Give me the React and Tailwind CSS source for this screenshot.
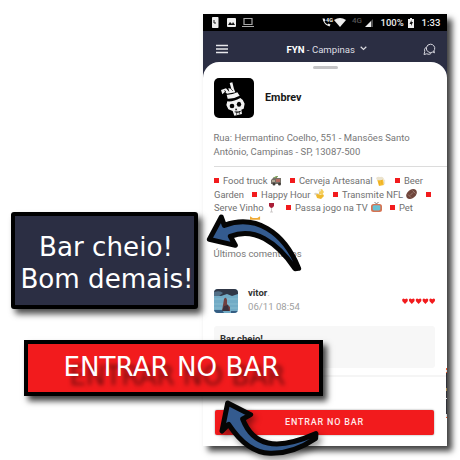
import React from "react";

const Square = ({ className = "" }) => (
  <span className={`h-[5px] w-[5px] shrink-0 bg-[#f21b1d] ${className}`} />
);

const Skull = () => (
  <svg viewBox="0 0 120 120" className="h-full w-full">
    <g fill="#f2f2f2">
      <path d="M40 70 Q58 72 79 60 Q89 65 92 77 L89 92 L82 95 L84 108 L61 113 L56 99 L43 94 L37 81Z" />
      <path d="M38 50 Q54 51 70 43 L77 53 Q59 63 41 62Z" />
      <path d="M39 47 L33 41 L25 49 L21 36 L36 31 L46 42 L43 30 L52 33 L47 15 L55 13 L60 33 L64 43Z" />
    </g>
    <g fill="#050505">
      <ellipse cx="54" cy="84" rx="7" ry="7" />
      <ellipse cx="75" cy="79" rx="6.5" ry="7.5" />
      <path d="M66 90 l4 7 h-7Z M62 103 q10 3 18-2 v-3 q-9 4-18 2Z" />
    </g>
    <path d="M31 38l5 3M52 34l4 4" stroke="#111" strokeWidth="3" />
    <path d="M68 101v10M76 99v10" stroke="#111" strokeWidth="2" />
  </svg>
);

const Truck = ({ className }) => (
  <svg viewBox="0 0 11 10" className={className}>
    <path d="M0 4 3 1h3v1h4v6H0Z" fill="#777269" />
    <path d="M2 2 5 0h2v1l-3 1Z" fill="#86aa65" />
    <path d="M5 3h4v3H5Z" fill="#b56b61" />
    <path d="M1 4h3v2H1Z" fill="#b1a997" />
    <circle cx="3" cy="8" r="1.5" fill="#403d39" />
    <circle cx="8.5" cy="8" r="1.5" fill="#403d39" />
  </svg>
);
const Beer = ({ className }) => (
  <svg viewBox="0 0 10 10" className={className}>
    <path d="m1 3 6-1 1 7-5 1Z" fill="#f6bd2d" />
    <path d="M7 4h1.6v4H7" fill="none" stroke="#e5decf" strokeWidth=".8" />
    <path d="M0 2Q2 0 4 1q3-1 4 2-3 2-7 1Z" fill="#ebe3ce" />
    <path d="m3 5 .5 4M5.5 4l.5 4" stroke="#df9c20" strokeWidth=".5" />
  </svg>
);
const Cheers = ({ className }) => (
  <svg viewBox="0 0 11 10" className={className}>
    <path d="M0 5q1-2 3-1l3 1-1 2-4-1Z" fill="#ddd5c5" />
    <path d="m3 5 4 1 2-1 1 2-3 3-4-1-1-3Z" fill="#efb92f" />
    <path d="m5 1 3-1 2 3-2 3-3-1Z" fill="#f5cf5c" />
    <path d="m4 1 3-1v2l-2 1Z" fill="#ece5d2" />
  </svg>
);
const Football = ({ className }) => (
  <svg viewBox="0 0 11 10" className={className}>
    <ellipse cx="5.5" cy="5" rx="5.9" ry="4.2" transform="rotate(-38 5.5 5)" fill="#70463c" />
    <path d="M2 5.5 5 8.5M6.5 1.5l3 3M4 6.5l3-3" stroke="#b69c92" strokeWidth=".6" />
  </svg>
);
const Wine = ({ className }) => (
  <svg viewBox="0 0 7 11" className={className}>
    <path d="M1 1h5v3Q3.5 8 1 4Z" fill="#a91e37" />
    <path d="M3.5 6v4M2 10h3" stroke="#c4bfbf" strokeWidth=".8" />
  </svg>
);
const Tv = ({ className }) => (
  <svg viewBox="0 0 11 11" className={className}>
    <path d="m3.5 0 2 2 2-2" fill="none" stroke="#7d7775" />
    <rect y="2" width="11" height="8" rx="2.5" fill="#d67352" />
    <rect x="1.7" y="3.2" width="7.6" height="5.2" rx="1.4" fill="#68c1d4" />
  </svg>
);

const StatusBar = () => (
  <div className="flex h-[17px] shrink-0 items-center bg-black text-[9.5px] font-medium text-[#ececec]">
    <svg viewBox="0 0 118 17" className="h-[17px] w-[118px] shrink-0">
      <rect x="9" y="3" width="6.5" height="11" rx=".7" fill="#eee" />
      <path d="M11 6v3h2" fill="none" stroke="#222" />
      <rect x="24" y="4" width="9" height="9" rx="1" fill="#eee" />
      <path d="m25 11 2-3 2 2 1-2 2 3Z" fill="#111" />
      <path d="M41 4.5h8v6h-8Z M39 12.5h12" fill="none" stroke="#aaa" strokeWidth="1.2" />
    </svg>
    <svg viewBox="118 0 53 17" className="h-[17px] w-[53px] shrink-0">
      <path d="M119.5 4.5q1 6 7 8l1-2-2-1-1 1q-2-1-3-3l1-1-1-2Z" fill="#eee" />
      <text x="123" y="8" fill="#eee" fontFamily="Roboto, sans-serif" fontSize="5.5" fontWeight="700">4G</text>
      <path d="M131 6q6-4 12 0l-6 7Z" fill="#eee" />
      <text x="149" y="9" fill="#555" fontFamily="Roboto, sans-serif" fontSize="8">4G</text>
      <path d="m162 13 6-6v6Z" fill="#eee" />
      <path d="m168 7 2-2v8h-2Z" fill="#555" />
    </svg>
    <span className="ml-[6.5px] w-[27.5px] whitespace-nowrap pt-px">100%</span>
    <svg viewBox="0 0 6 10" className="h-[10px] w-[6px] shrink-0">
      <path d="M1 1h1V0h2v1h2v9H0V1Z" fill="#eee" />
      <path d="M3.5 2 1.5 6H3v2l2-4H3.5Z" fill="#111" />
    </svg>
    <span className="ml-[7.5px] pt-px tracking-[.1px]">1:33</span>
  </div>
);

export default function App() {
  return (
    <main className="relative h-[460px] w-[460px] overflow-hidden bg-white pl-[203px] pt-[14px] font-[Roboto,sans-serif]">
      <section className="flex h-[432px] w-[244px] flex-col bg-[#2b2e43] shadow-[5px_5px_6px_rgba(0,0,0,.75)]">
        <StatusBar />
        <header className="flex h-[31px] shrink-0 items-center pt-[5px]">
          <svg viewBox="0 0 12 10" className="ml-[13px] h-[10px] w-[12px]">
            <path d="M0 1.5h12M0 5h12M0 8.5h12" stroke="#e7e7eb" strokeWidth="1.3" />
          </svg>
          <p className="ml-[58.5px] w-[70.5px] whitespace-nowrap pt-[2px] text-[9.6px] text-[#dddde2]">
            <b className="text-white">FYN</b> - Campinas
          </p>
          <svg viewBox="0 0 7 5" className="mb-[2px] ml-[3px] h-[5px] w-[7px]">
            <path d="m.7.8 2.8 2.7L6.3.8" fill="none" stroke="#dddde2" strokeWidth="1.2" />
          </svg>
          <svg viewBox="0 0 13 13" className="ml-[56px] h-[13px] w-[13px]" fill="none" stroke="#d6d6de" strokeWidth="1">
            <path d="M7.4 1.2a4.2 4.2 0 1 1-2 7.8A4.2 4.2 0 0 1 7.4 1.2M10 9l1.5.8-.5-1.8M3 4.2Q.8 6 1.7 8.7L1 11.5l2.7-.7q2.3 1.2 4.5-.3" />
          </svg>
        </header>

        <div className="flex min-h-0 flex-1 flex-col rounded-t-[16px] bg-white">
          <div className="mx-auto mt-[4px] h-[3px] w-[25px] shrink-0 rounded-full bg-[#c4c4c6]" />
          <div className="ml-[11px] mt-[9px] flex h-[40px] shrink-0 items-center">
            <div className="h-[40px] w-[40px] overflow-hidden rounded-[5px] bg-black"><Skull /></div>
            <h1 className="ml-[11px] pt-px text-[10.8px] font-bold text-[#171717]">Embrev</h1>
          </div>
          <address className="ml-[10.5px] mt-[13px] h-[35px] shrink-0 whitespace-nowrap text-[9.5px] not-italic leading-[13.5px] text-[#777]">
            Rua: Hermantino Coelho, 551 - Mansões Santo<br />Antônio, Campinas - SP, 13087-500
          </address>
          <hr className="ml-[11px] shrink-0 border-[#dcdcdc]" />
          <div className="ml-[11px] mt-[7px] flex h-[41px] shrink-0 flex-col whitespace-nowrap text-[9.4px] leading-[13.5px] text-[#707070]">
            <div className="flex h-[13.5px] items-center">
              <Square /><span className="ml-[4px] w-[48px]">Food truck</span>
              <Truck className="h-[10px] w-[11px] shrink-0" />
              <Square className="ml-[8px]" /><span className="ml-[4px] w-[77px]">Cerveja Artesanal</span>
              <Beer className="h-[10px] w-[10px] shrink-0" />
              <Square className="ml-[9px]" /><span className="ml-[4px]">Beer</span>
            </div>
            <div className="flex h-[13.5px] items-center">
              <span className="w-[38px]">Garden</span><Square /><span className="ml-[4px] w-[53px]">Happy Hour</span>
              <Cheers className="h-[10px] w-[11px] shrink-0" />
              <Square className="ml-[8px]" /><span className="ml-[4px] w-[64px]">Transmite NFL</span>
              <Football className="h-[10px] w-[11px] shrink-0" />
              <Square className="ml-[9px]" />
            </div>
            <div className="flex h-[13.5px] items-center">
              <span className="w-[54px]">Serve Vinho</span>
              <Wine className="h-[11px] w-[7px] shrink-0" />
              <Square className="ml-[11px]" /><span className="ml-[4px] w-[76px]">Passa jogo na TV</span>
              <Tv className="h-[11px] w-[11px] shrink-0" />
              <Square className="ml-[8px]" /><span className="ml-[4px]">Pet</span>
            </div>
          </div>
          <div className="ml-[47px] h-[5px] shrink-0">
            <svg viewBox="0 0 12 5" className="h-[5px] w-[11px]"><path d="M0 5V1l3 2h5l3-2v4Z" fill="#efaa35" /></svg>
          </div>
          <h2 className="ml-[10.5px] mt-[27px] h-[14px] shrink-0 text-[9.5px] leading-[14px] text-[#777]">Últimos comentários</h2>
          <div className="ml-[11px] mt-[26px] flex h-[28px] shrink-0 items-center">
            <svg viewBox="0 0 24 24" className="h-[24px] w-[24px] shrink-0 overflow-hidden rounded-[4px] blur-[.4px]">
              <path d="M0 0h24v24H0Z" fill="#72abc5" />
              <path d="M0 0h24v5l-6 2-5-2-6 2-7-1Z" fill="#303746" />
              <path d="M0 3q6-2 9 1l-4 3H0Z" fill="#527087" />
              <path d="M0 10h24M0 15h24M0 19h24" stroke="#9bcedb" strokeWidth="1.2" opacity=".5" />
              <path d="M10 10q2-3 3 1v4l3 3v4H8l1-6Z" fill="#713f3e" />
              <path d="m10 17 4-1 1 6H8Z" fill="#3b303b" />
              <path d="M0 21h8l2 3H0ZM17 22h7v2h-7Z" fill="#345d82" />
            </svg>
            <div className="ml-[10px] w-[153.5px] whitespace-nowrap">
              <p className="-mt-[2px] text-[9.5px] font-bold leading-[14px] text-[#333]">vitor<span className="font-normal text-[#aaa]">.</span></p>
              <p className="text-[9.6px] leading-[14px] text-[#a0a0a0]">06/11 08:54</p>
            </div>
            <svg viewBox="0 0 34 6" className="h-[6px] w-[34px]" fill="#f21b1d">
              {[0, 6.8, 13.6, 20.4, 27.2].map((x) => <path key={x} transform={`translate(${x} 0)`} d="M3 6 .4 3.2Q-.4.5 1.6.4L3 1.2 4.4.4Q6.4.5 5.6 3.2Z" />)}
            </svg>
          </div>
          <div className="ml-[11px] mt-[11px] h-[42px] w-[221px] shrink-0 rounded-[3px] bg-[#f7f7f7] pl-[6px] pt-[6px] text-[9.5px] font-bold leading-[14px] text-[#333]">Bar cheio!</div>
          <div className="mt-[7px] h-[2px] shrink-0 bg-[#f5f5f5]" />
          <button className="ml-[12px] mt-[33px] h-[25px] w-[219px] shrink-0 rounded-[2px] bg-[#f21b1d] text-[9px] font-medium tracking-[.8px] text-[#ffe9e9] shadow-[0_0_2px_rgba(0,0,0,.45)]">ENTRAR NO BAR</button>
        </div>
      </section>

      <svg viewBox="0 0 2 50" className="absolute left-[446px] top-[368px] h-[50px] w-[1px]" preserveAspectRatio="none">
        <path d="M0 0h2v46H0Z" fill="#303138" />
        <path d="M0 0h2v2H0Zm0 4h2v1H0Zm0 45h2v1H0Z" fill="#ee5c31" />
        <path d="M0 20h2v3H0Z" fill="#a3854f" />
        <path d="M0 2h2v2H0Zm0 28h2v1H0Zm0 16h2v3H0Z" fill="#ddd" />
      </svg>

      <div className="absolute left-[11px] top-[212px] flex h-[97px] w-[187px] flex-col items-center justify-center whitespace-nowrap rounded-[3px] border-4 border-black bg-[#2b2e43] pl-[5px] pt-[5px] font-['DejaVu_Sans',sans-serif] text-[26.15px] leading-[32px] text-white shadow-[4px_5px_6px_rgba(0,0,0,.7)]">
        <span className="mr-[2px]">Bar cheio!</span><span>Bom demais!</span>
      </div>
      <div className="absolute left-[24px] top-[340px] flex h-[56px] w-[299px] items-center justify-center whitespace-nowrap border-4 border-black bg-[#f21b1d] pb-px pr-[4px] font-['DejaVu_Sans',sans-serif] text-[26.15px] text-white shadow-[4px_5px_6px_rgba(0,0,0,.75)] [text-shadow:6px_9px_4px_rgba(0,0,0,.5)]">ENTRAR NO BAR</div>

      <svg viewBox="0 0 130 75" className="absolute left-[195px] top-[205px] h-[75px] w-[130px] overflow-visible">
        <path transform="scale(.3333)" d="M43 103 79 36 88 61Q157 36 217 71T311 190L300 191Q258 128 208 101T106 94L121 121Z" fill="#345b8f" stroke="#050505" strokeWidth="15" strokeLinejoin="round" />
      </svg>
      <svg viewBox="0 0 160 135" className="absolute left-[180px] top-[325px] h-[135px] w-[160px] overflow-visible drop-shadow-[3px_4px_3px_rgba(0,0,0,.4)]">
        <path transform="scale(.3333)" d="M143 234 212 269 188 282Q211 342 264 354T408 326L407 340Q338 387 270 385T146 298L126 318Z" fill="#345b8f" stroke="#050505" strokeWidth="15" strokeLinejoin="round" />
      </svg>
    </main>
  );
}
